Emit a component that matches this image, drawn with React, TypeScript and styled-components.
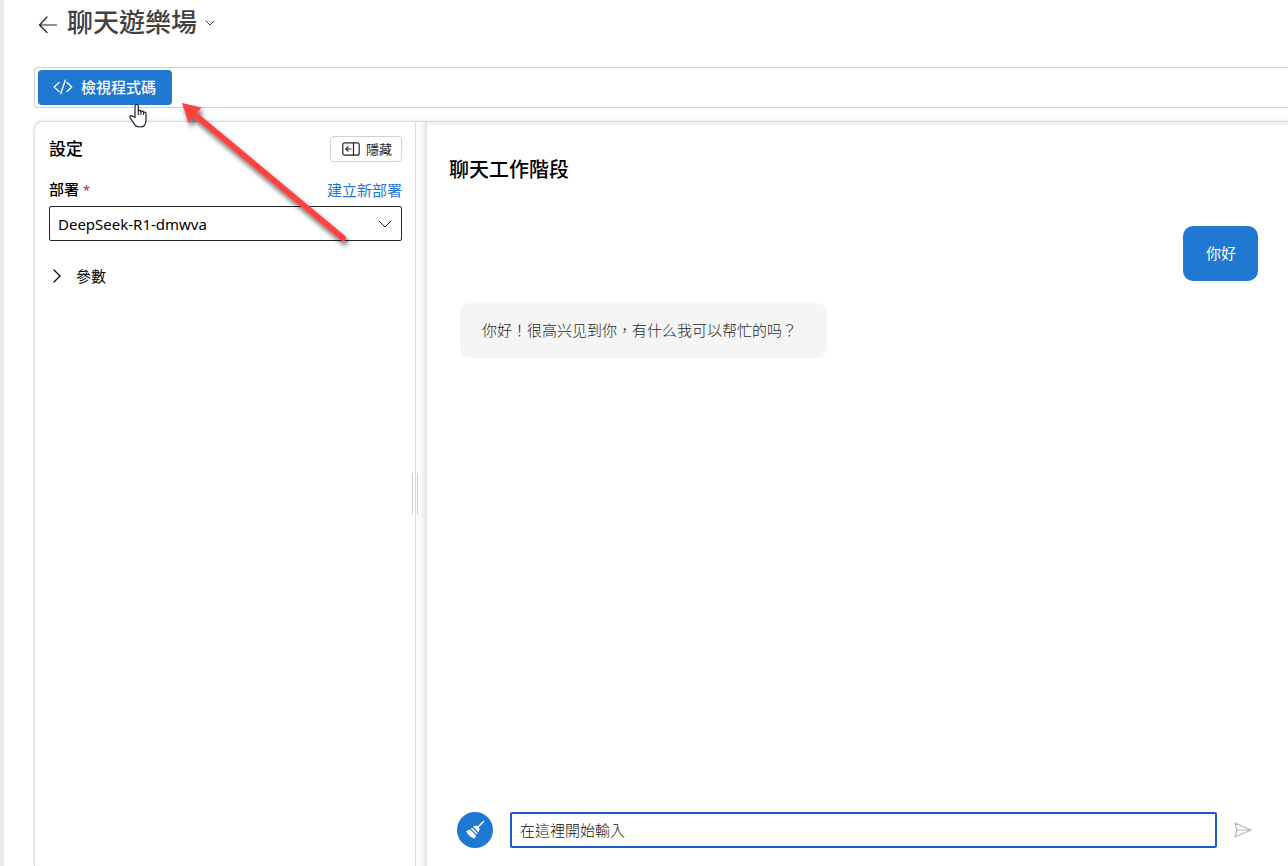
import React from "react";
import styled, { createGlobalStyle } from "styled-components";

const BLUE = "#1f78d1";
const INK = "#242424";
const LINE = "#d1d1d1";

const GlobalStyle = createGlobalStyle`
  * { box-sizing: border-box; }
  body {
    margin: 0;
    background: #fff;
    color: #000;
    font-family: "Noto Sans", "Noto Sans CJK TC", sans-serif;
    font-size: 15px;
    line-height: 20px;
  }
  button, input, select { font: inherit; color: inherit; }
  h1, h2, p { margin: 0; }
`;

const Page = styled.div`
  position: relative;
  display: flex;
  flex-direction: column;
  min-height: 100vh;
  padding-left: 30px;
  border-left: 4px solid #e9ebf0;
  overflow: hidden;
`;

const Header = styled.header`
  display: flex;
  align-items: center;
  height: 67px;
  padding: 0 0 21px 4px;
`;

const IconButton = styled.button`
  display: flex;
  align-items: center;
  justify-content: center;
  padding: 0;
  border: 0;
  background: none;
  color: ${INK};
  cursor: pointer;
`;

const PageTitle = styled.h1`
  margin: 0 8px 0 9px;
  padding-bottom: 2px;
  color: #424242;
  font-size: 26px;
  line-height: 36px;
  font-weight: 500;
`;

const Toolbar = styled.div`
  display: flex;
  align-items: center;
  height: 41px;
  padding: 0 3px;
  border: 1px solid ${LINE};
  border-right: 0;
  border-radius: 4px 0 0 4px;
`;

const CodeButton = styled.button`
  display: flex;
  align-items: center;
  gap: 8px;
  height: 35px;
  padding: 0 16px 1px 15px;
  border: 0;
  border-radius: 4px;
  background: ${BLUE};
  color: #fff;
  font-weight: 500;
  cursor: pointer;
`;

const Workspace = styled.main`
  display: flex;
  flex: 1;
  margin-top: 13px;
  border: 1px solid #dcdcdc;
  border-width: 1px 0 0 1px;
  border-radius: 8px 0 0 0;
  box-shadow: 0 0 3px rgba(0, 0, 0, 0.16);
  overflow: hidden;
`;

const Settings = styled.section`
  flex: 0 0 381px;
  padding: 14px 13px 14px 14px;
  border-right: 1px solid #dcdcdc;
`;

const Row = styled.div`
  display: flex;
  align-items: center;
  justify-content: space-between;
`;

const SettingsTitle = styled.h2`
  font-size: 17px;
  line-height: 26px;
  font-weight: 500;
`;

const HideButton = styled.button`
  display: flex;
  align-items: center;
  gap: 6px;
  height: 26px;
  padding: 0 9px 0 11px;
  border: 1px solid ${LINE};
  border-radius: 4px;
  background: #fff;
  color: ${INK};
  font-size: 13px;
  cursor: pointer;
`;

const FieldHead = styled(Row)`
  margin: 17px 0 6px;
`;

const FieldLabel = styled.label`
  font-weight: 500;
`;

const Required = styled.span`
  margin-left: 4px;
  color: #bc2f32;
  font-size: 13px;
`;

const NewLink = styled.a`
  color: ${BLUE};
  text-decoration: none;
`;

const SelectBox = styled.div`
  display: grid;
  align-items: center;
  height: 35px;

  > * { grid-area: 1 / 1; }
  > svg { justify-self: end; margin-right: 10px; pointer-events: none; }
`;

const Select = styled.select`
  width: 100%;
  height: 35px;
  padding: 0 32px 0 8px;
  border: 1px solid ${INK};
  border-radius: 2px;
  background: #fff;
  appearance: none;
`;

const Disclosure = styled.button`
  display: flex;
  align-items: center;
  gap: 12px;
  margin-top: 25px;
  padding: 0 0 0 1px;
  border: 0;
  background: none;
  cursor: pointer;
`;

const Splitter = styled.div`
  flex: 0 0 11px;
  display: flex;
  align-items: center;
  background: linear-gradient(to right, #fefefe, #fafafa 45%, #e6e6e6);
`;

const Grip = styled.div`
  flex: none;
  width: 6px;
  height: 42px;
  margin-left: -4px;
  border: 1px solid ${LINE};
  border-width: 0 1px;
`;

const Chat = styled.section`
  flex: 1;
  display: flex;
  flex-direction: column;
  border-top: 3px solid #f3f3f3;
  padding: 31px 30px 18px 22px;
`;

const ChatTitle = styled.h2`
  font-size: 20px;
  line-height: 28px;
  font-weight: 500;
`;

const Messages = styled.div`
  flex: 1;
  display: flex;
  flex-direction: column;
  gap: 22px;
  padding: 42px 0 0 11px;
`;

const Bubble = styled.p<{ $mine?: boolean }>`
  align-self: ${(p) => (p.$mine ? "flex-end" : "flex-start")};
  padding: ${(p) => (p.$mine ? "17px 22px 18px 23px" : "17px 30px 18px 22px")};
  border-radius: 10px;
  background: ${(p) => (p.$mine ? BLUE : "#f5f5f5")};
  color: ${(p) => (p.$mine ? "#fff" : "#1f1f1f")};
  font-weight: ${(p) => (p.$mine ? 400 : 300)};
`;

const Composer = styled.form`
  display: flex;
  align-items: center;
  gap: 17px;
  padding: 0 6px 0 8px;
`;

const ClearButton = styled(IconButton)`
  flex: none;
  width: 36px;
  height: 36px;
  border-radius: 50%;
  background: ${BLUE};
  color: #fff;
`;

const Prompt = styled.input`
  flex: 1;
  min-width: 0;
  height: 36px;
  padding: 0 8px;
  border: 2px solid #1c5ac8;
  border-radius: 2px;
  background: #fff;
  outline: 0;

  &::placeholder { color: #111; opacity: 1; font-weight: 300; }
`;

const SendButton = styled(IconButton)`
  color: #b5b5b5;
`;

const Pointer = styled.svg`
  position: absolute;
  left: 125px;
  top: 103px;
  pointer-events: none;
`;

const Callout = styled.svg`
  position: absolute;
  left: 166px;
  top: 90px;
  pointer-events: none;
`;

const stroke = {
  fill: "none",
  stroke: "currentColor",
  strokeLinecap: "round" as const,
  strokeLinejoin: "round" as const,
};

export default function App() {
  return (
    <>
      <GlobalStyle />
      <Page>
        <Header>
          <IconButton aria-label="返回">
            <svg width="20" height="20" viewBox="0 0 20 20" {...stroke} strokeWidth="1.2">
              <path d="M9 4 1.500 12 9 19.500M1.500 12H18.500" />
            </svg>
          </IconButton>
          <PageTitle>聊天遊樂場</PageTitle>
          <IconButton aria-label="切換遊樂場">
            <svg width="10" height="6" viewBox="0 0 10 6" {...stroke} strokeWidth=".9">
              <path d="m1 1 4 4 4-4" />
            </svg>
          </IconButton>
        </Header>

        <Toolbar>
          <CodeButton>
            <svg width="20" height="16" viewBox="0 0 20 16" {...stroke} strokeWidth="1.3">
              <path d="M6 3.500 1.200 8 6 12.500M14 3.500 18.800 8 14 12.500M12.300 1.200 7.700 14.800" />
            </svg>
            檢視程式碼
          </CodeButton>
        </Toolbar>

        <Workspace>
          <Settings>
            <Row>
              <SettingsTitle>設定</SettingsTitle>
              <HideButton>
                <svg width="18" height="14" viewBox="0 0 18 14" {...stroke} strokeWidth="1.2">
                  <rect x=".8" y=".8" width="16.4" height="12.4" rx="2" />
                  <path d="M11.500 1v12M9 7H4M6 4.800 3.800 7 6 9.200" />
                </svg>
                隱藏
              </HideButton>
            </Row>
            <FieldHead>
              <FieldLabel htmlFor="deployment">
                部署<Required>*</Required>
              </FieldLabel>
              <NewLink href="#new">建立新部署</NewLink>
            </FieldHead>
            <SelectBox>
              <Select id="deployment" defaultValue="r1">
                <option value="r1">DeepSeek-R1-dmwva</option>
              </Select>
              <svg width="14" height="8" viewBox="0 0 14 8" {...stroke} color={INK}>
                <path d="m1 1 6 6 6-6" />
              </svg>
            </SelectBox>
            <Disclosure aria-expanded="false">
              <svg width="14" height="14" viewBox="0 0 14 14" {...stroke} strokeWidth="1.2">
                <path d="m4 1 6 6-6 6" />
              </svg>
              參數
            </Disclosure>
          </Settings>

          <Splitter>
            <Grip />
          </Splitter>

          <Chat>
            <ChatTitle>聊天工作階段</ChatTitle>
            <Messages>
              <Bubble $mine>你好</Bubble>
              <Bubble>你好！很高兴见到你，有什么我可以帮忙的吗？</Bubble>
            </Messages>
            <Composer>
              <ClearButton type="button" aria-label="清除聊天">
                <svg width="20" height="20" viewBox="0 0 20 20" fill="#fff">
                  <path d="M18.500 1.500 13.500 6.500" stroke="#fff" strokeWidth="1.500" strokeLinecap="round" />
                  <path d="M8 6.800c1.600-1.500 4-1.400 5.400 0s1.500 3.800 0 5.400Z" />
                  <path d="m7 7.800 5.500 5.500-.9 1.100-5.800-5.700ZM5 9.400l6 6-1.600 3.300C5.700 17.300 2.600 14.700 1 11c1.500-.3 2.800-.8 4-1.600Z" />
                </svg>
              </ClearButton>
              <Prompt aria-label="訊息" placeholder="在這裡開始輸入" />
              <SendButton type="submit" aria-label="傳送">
                <svg width="18" height="16" viewBox="0 0 18 16" {...stroke} strokeWidth="1.2">
                  <path d="M1 1 17 8 1 15 3 8ZM3 8H17" />
                </svg>
              </SendButton>
            </Composer>
          </Chat>
        </Workspace>

        <Callout width="190" height="166" viewBox="0 0 190 166" aria-hidden="true">
          <defs>
            <filter id="drop" x="-10%" y="-10%" width="125%" height="125%">
              <feDropShadow dx="2" dy="4" stdDeviation="2.500" floodColor="#000" floodOpacity=".6" />
            </filter>
          </defs>
          <g filter="url(#drop)">
            <path d="M24 24 173 148" stroke="#fd4343" strokeWidth="6" strokeLinecap="round" />
            <path d="M12 13 31.500 17.500 18.500 33Z" fill="#fd4343" />
          </g>
        </Callout>
        <Pointer width="18" height="26" viewBox="0 0 18 26" aria-hidden="true">
          <path
            d="M6 14.500V3.300c0-2.400 3.300-2.400 3.300 0V8c.6-1 2.500-.8 2.700.6.800-.9 2.400-.5 2.600.8 1-.7 2.400 0 2.400 1.300v6.500c0 4-2.200 6.800-6 6.800-3.500 0-5.300-1.600-6.500-4.200L1 14.500c-.7-1.700 1.400-2.600 2.700-1.200Z"
            fill="#fff"
            stroke="#1b1b2b"
            strokeWidth="1.2"
            strokeLinejoin="round"
          />
          <path d="M9.300 8v4M12 8.600V12M14.600 9.400V12" stroke="#1b1b2b" strokeWidth="1.100" />
        </Pointer>
      </Page>
    </>
  );
}
